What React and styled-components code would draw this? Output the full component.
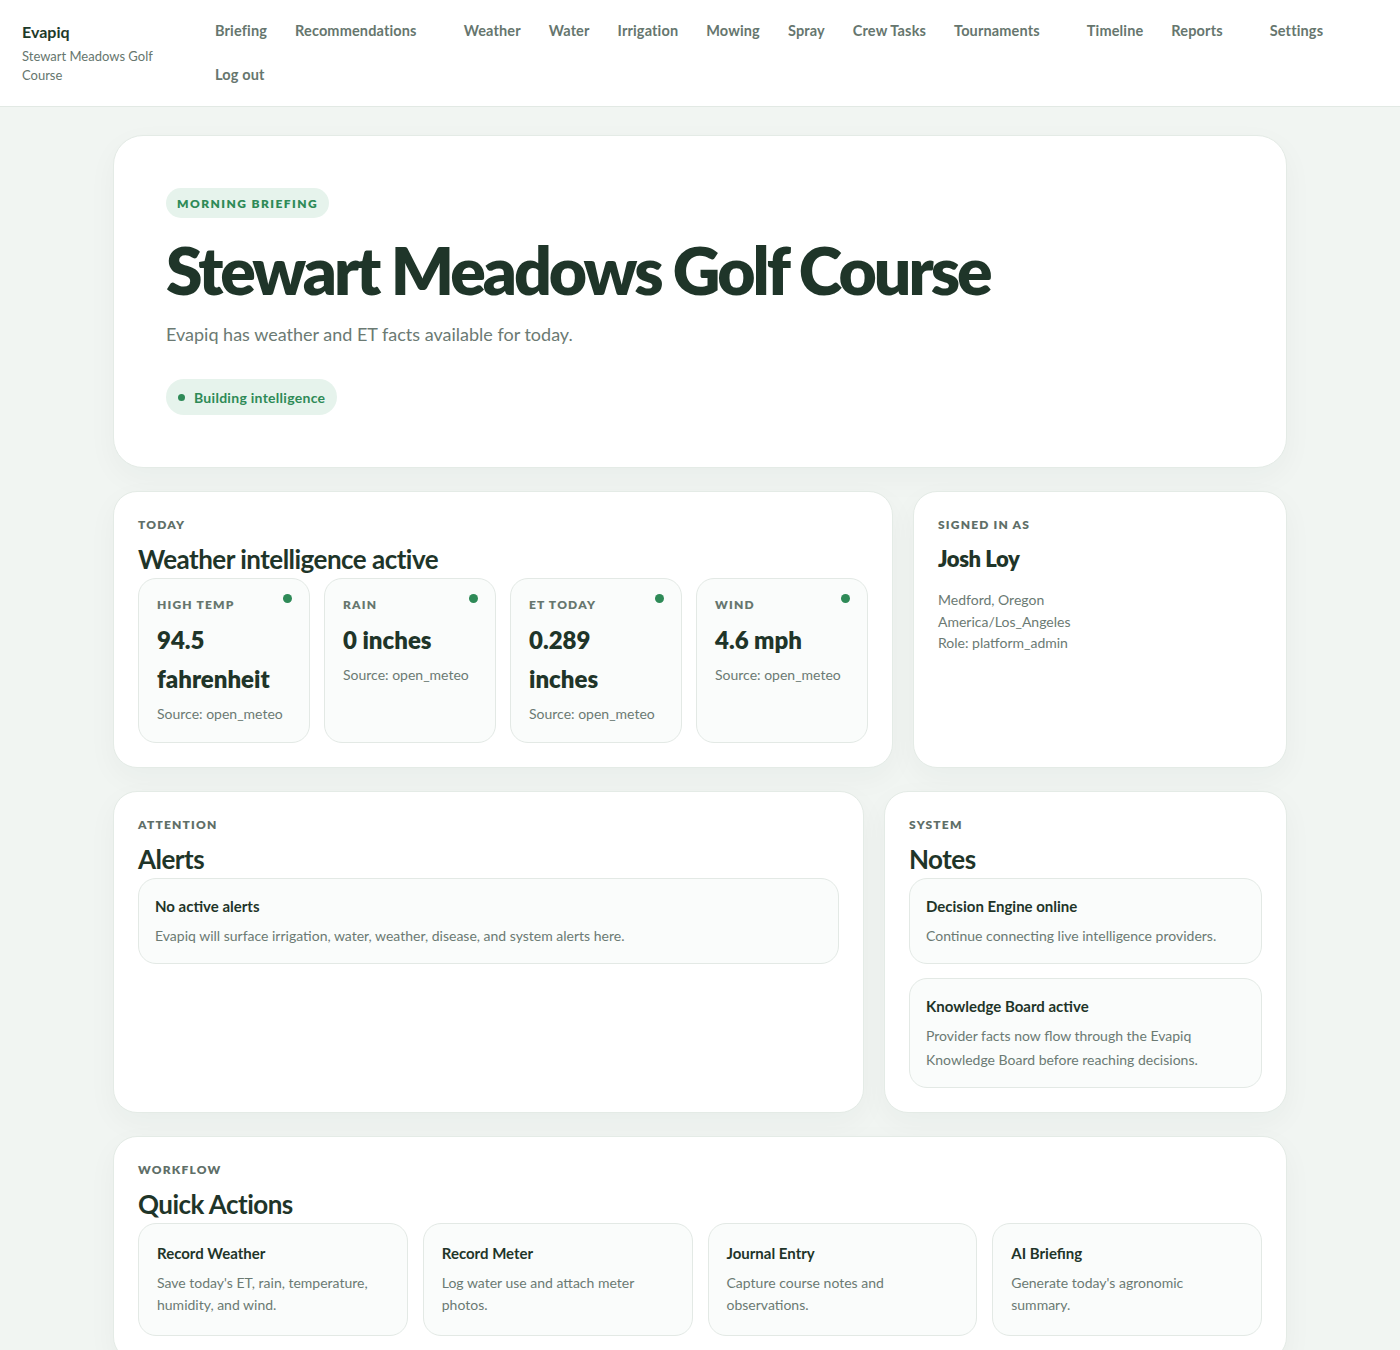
import styled, { createGlobalStyle } from 'styled-components'

const GlobalStyle = createGlobalStyle`
  * { box-sizing: border-box; }

  body {
    margin: 0;
    background: #f1f5f2;
    font-family: Lato, "Noto Sans", sans-serif;
    color: #1f3529;
  }
`

const navLinks = [
  { label: 'Briefing' },
  { label: 'Recommendations', wide: true },
  { label: 'Weather' },
  { label: 'Water' },
  { label: 'Irrigation' },
  { label: 'Mowing' },
  { label: 'Spray' },
  { label: 'Crew Tasks' },
  { label: 'Tournaments', wide: true },
  { label: 'Timeline' },
  { label: 'Reports', wide: true },
  { label: 'Settings' },
]

const metrics = [
  { label: 'High temp', value: '94.5 fahrenheit', source: 'open_meteo' },
  { label: 'Rain', value: '0 inches', source: 'open_meteo' },
  { label: 'ET today', value: '0.289 inches', source: 'open_meteo' },
  { label: 'Wind', value: '4.6 mph', source: 'open_meteo' },
]

const notes = [
  { title: 'Decision Engine online', body: 'Continue connecting live intelligence providers.' },
  { title: 'Knowledge Board active', body: 'Provider facts now flow through the Evapiq Knowledge Board before reaching decisions.' },
]

const actions = [
  { title: 'Record Weather', body: "Save today's ET, rain, temperature, humidity, and wind." },
  { title: 'Record Meter', body: 'Log water use and attach meter photos.' },
  { title: 'Journal Entry', body: 'Capture course notes and observations.' },
  { title: 'AI Briefing', body: "Generate today's agronomic summary." },
]

const App = () => (
  <>
    <GlobalStyle />
    <Header>
      <Brand>
        <BrandName>Evapiq</BrandName>
        <BrandCourse>Stewart Meadows Golf Course</BrandCourse>
      </Brand>
      <Nav>
        {navLinks.map(link => (
          <NavLink key={link.label} href='#' $wide={link.wide}>{link.label}</NavLink>
        ))}
        <NavBreak />
        <NavLink href='#'>Log out</NavLink>
      </Nav>
    </Header>

    <Main>
      <Hero>
        <Pill>Morning briefing</Pill>
        <HeroTitle>Stewart Meadows Golf Course</HeroTitle>
        <HeroLead>Evapiq has weather and ET facts available for today.</HeroLead>
        <Status><StatusDot />Building intelligence</Status>
      </Hero>

      <Row $columns='780px 1fr'>
        <Card>
          <Eyebrow>Today</Eyebrow>
          <CardTitle>Weather intelligence active</CardTitle>
          <MetricGrid>
            {metrics.map(m => (
              <Metric key={m.label}>
                <MetricHead>
                  <MetricLabel>{m.label}</MetricLabel>
                  <LiveDot />
                </MetricHead>
                <MetricValue>{m.value}</MetricValue>
                <MetricSource>Source: {m.source}</MetricSource>
              </Metric>
            ))}
          </MetricGrid>
        </Card>

        <Card>
          <Eyebrow>Signed in as</Eyebrow>
          <UserName>Josh Loy</UserName>
          <UserMeta>
            Medford, Oregon<br />
            America/Los_Angeles<br />
            Role: platform_admin
          </UserMeta>
        </Card>
      </Row>

      <Row $columns='751px 1fr'>
        <Card>
          <Eyebrow>Attention</Eyebrow>
          <CardTitle>Alerts</CardTitle>
          <Stack>
            <Item>
              <ItemTitle>No active alerts</ItemTitle>
              <ItemBody>Evapiq will surface irrigation, water, weather, disease, and system alerts here.</ItemBody>
            </Item>
          </Stack>
        </Card>

        <Card>
          <Eyebrow>System</Eyebrow>
          <CardTitle>Notes</CardTitle>
          <Stack>
            {notes.map(n => (
              <Item key={n.title}>
                <ItemTitle>{n.title}</ItemTitle>
                <ItemBody>{n.body}</ItemBody>
              </Item>
            ))}
          </Stack>
        </Card>
      </Row>

      <Card>
        <Eyebrow>Workflow</Eyebrow>
        <CardTitle>Quick Actions</CardTitle>
        <ActionGrid>
          {actions.map(a => (
            <Action key={a.title}>
              <ItemTitle>{a.title}</ItemTitle>
              <ActionBody>{a.body}</ActionBody>
            </Action>
          ))}
        </ActionGrid>
      </Card>
    </Main>
  </>
)

const Header = styled.header`
  display: flex;
  align-items: flex-start;
  gap: 53px;
  padding: 21px 22px 0 22px;
  height: 107px;
  background: #ffffff;
  border-bottom: 1px solid #e2e9e4;
`

const Brand = styled.div`
  width: 140px;
  flex-shrink: 0;
`

const BrandName = styled.div`
  font-size: 16px;
  font-weight: 700;
  line-height: 22px;
  color: #1d3a2a;
`

const BrandCourse = styled.div`
  margin-top: 4px;
  font-size: 13px;
  line-height: 19px;
  color: #66766e;
`

const Nav = styled.nav`
  display: flex;
  flex-wrap: wrap;
  column-gap: 28px;
  row-gap: 0;
  flex: 1;
`

const NavLink = styled.a`
  font-size: 14.5px;
  font-weight: 700;
  line-height: 20px;
  letter-spacing: 0.01em;
  color: #66766e;
  text-decoration: none;
  margin-right: ${p => p.$wide ? '19px' : '0'};
`

const NavBreak = styled.div`
  flex-basis: 100%;
  height: 24px;
`

const Main = styled.main`
  max-width: 1174px;
  margin: 0 auto;
  padding: 28px 0 40px 0;
  display: flex;
  flex-direction: column;
  gap: 23px;
`

const Card = styled.section`
  background: #ffffff;
  border: 1px solid #e4ebe6;
  border-radius: 24px;
  padding: 25px 24px 24px 24px;
  box-shadow: 0 10px 30px rgba(31, 53, 41, 0.04);
  min-width: 0;
`

const Hero = styled(Card)`
  border-radius: 30px;
  padding: 52px;
`

const Pill = styled.div`
  display: inline-flex;
  align-items: center;
  height: 30px;
  padding: 0 11px;
  border-radius: 999px;
  background: #e6f3ec;
  color: #2e8a57;
  font-size: 12px;
  font-weight: 800;
  letter-spacing: 0.12em;
  text-transform: uppercase;
`

const HeroTitle = styled.h1`
  margin: 17px 0 0 0;
  font-size: 66px;
  font-weight: 800;
  line-height: 70px;
  letter-spacing: -0.045em;
  color: #1f3529;
`

const HeroLead = styled.p`
  margin: 16px 0 0 0;
  font-size: 18px;
  line-height: 26px;
  color: #6b7a73;
`

const Status = styled.div`
  display: inline-flex;
  align-items: center;
  gap: 9px;
  margin-top: 32px;
  height: 36px;
  padding: 0 12px;
  border-radius: 999px;
  background: #e6f3ec;
  color: #2e8a57;
  font-size: 14px;
  font-weight: 700;
  letter-spacing: 0.02em;
`

const StatusDot = styled.span`
  width: 7px;
  height: 7px;
  border-radius: 50%;
  background: #2e8a57;
`

const Row = styled.div`
  display: grid;
  grid-template-columns: ${p => p.$columns};
  gap: 20px;
`

const Eyebrow = styled.div`
  font-size: 12px;
  font-weight: 800;
  line-height: 16px;
  letter-spacing: 0.1em;
  text-transform: uppercase;
  color: #5f6f68;
`

const CardTitle = styled.h2`
  margin: 10px 0 3px 0;
  font-size: 26px;
  font-weight: 700;
  line-height: 32px;
  letter-spacing: -0.02em;
  color: #1f3529;
`

const MetricGrid = styled.div`
  display: grid;
  grid-template-columns: repeat(4, minmax(0, 1fr));
  gap: 14px;
`

const Metric = styled.div`
  padding: 15px 18px 18px 18px;
  background: #fafcfb;
  border: 1px solid #e3e9e5;
  border-radius: 18px;
`

const MetricHead = styled.div`
  display: flex;
  justify-content: space-between;
  align-items: flex-start;
`

const MetricLabel = styled.div`
  margin-top: 3px;
  font-size: 12px;
  font-weight: 800;
  line-height: 16px;
  letter-spacing: 0.1em;
  text-transform: uppercase;
  color: #66766e;
`

const LiveDot = styled.span`
  width: 9px;
  height: 9px;
  margin-right: -1px;
  border-radius: 50%;
  background: #2e8a57;
`

const MetricValue = styled.div`
  margin-top: 7px;
  font-size: 24px;
  font-weight: 800;
  line-height: 39px;
  color: #1f3529;
`

const MetricSource = styled.div`
  margin-top: 6px;
  font-size: 14px;
  line-height: 20px;
  color: #6b7a73;
`

const UserName = styled.div`
  margin-top: 11px;
  font-size: 22px;
  font-weight: 800;
  line-height: 30px;
  letter-spacing: -0.02em;
  color: #1f3529;
`

const UserMeta = styled.div`
  margin-top: 15px;
  font-size: 14px;
  line-height: 21.5px;
  color: #6b7a73;
`

const Stack = styled.div`
  display: flex;
  flex-direction: column;
  gap: 14px;
`

const Item = styled.div`
  padding: 16px 16px 15px 16px;
  background: #fafcfb;
  border: 1px solid #e3e9e5;
  border-radius: 18px;
`

const ItemTitle = styled.div`
  font-size: 15px;
  font-weight: 700;
  line-height: 22px;
  color: #1f3529;
`

const ItemBody = styled.div`
  margin-top: 7px;
  font-size: 14px;
  line-height: 24px;
  color: #6b7a73;
`

const ActionGrid = styled.div`
  display: grid;
  grid-template-columns: repeat(4, minmax(0, 1fr));
  gap: 15px;
`

const Action = styled.div`
  padding: 18px 18px 18px 18px;
  min-height: 113px;
  background: #fafcfb;
  border: 1px solid #e3e9e5;
  border-radius: 18px;
`

const ActionBody = styled.div`
  margin-top: 8px;
  font-size: 14px;
  line-height: 22px;
  color: #6b7a73;
`

export default App
